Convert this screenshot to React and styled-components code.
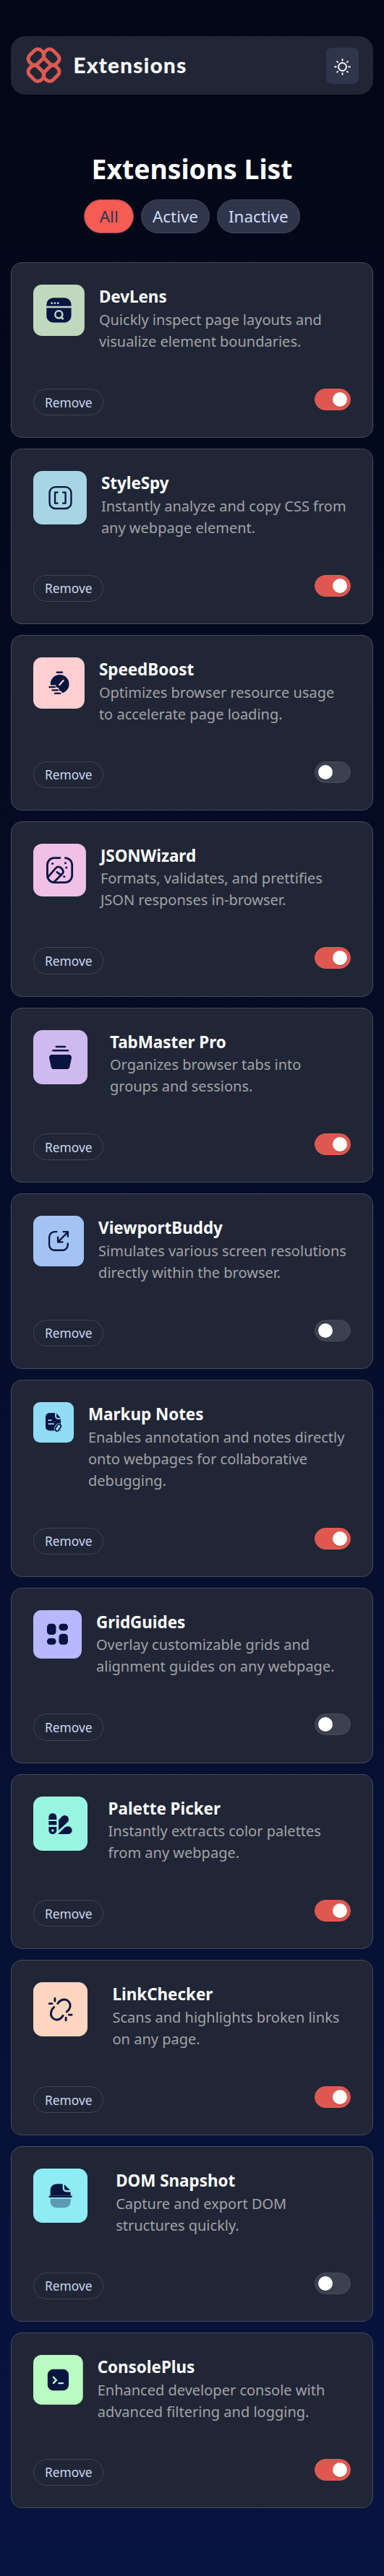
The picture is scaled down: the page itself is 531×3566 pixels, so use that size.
import React, { useState } from "react";
import styled, { createGlobalStyle } from "styled-components";

const INK = "#091540";

const GlobalStyle = createGlobalStyle`
  * { box-sizing: border-box; }
  body {
    margin: 0;
    font-family: "Noto Sans", sans-serif;
    background: linear-gradient(180deg, #020715 0%, #081440 100%);
  }
  button { font-family: inherit; cursor: pointer; }
`;

const Page = styled.div`
  min-height: 3566px;
  padding: 50px 15px 94px;
  display: flex;
  flex-direction: column;
`;

const Header = styled.header`
  display: flex;
  align-items: center;
  justify-content: space-between;
  height: 81px;
  padding: 0 20px 0 21px;
  border-radius: 20px;
  background: #212636;
`;

const Brand = styled.div`
  display: flex;
  align-items: center;
  gap: 16.5px;
`;

const BrandName = styled.span`
  padding-bottom: 2px;
  font-family: Lato, sans-serif;
  font-weight: 700;
  font-size: 29.4px;
  line-height: 40px;
  letter-spacing: 1.5px;
  color: #fbfdfe;
  -webkit-text-stroke: 0.4px #fbfdfe;
`;

const ThemeButton = styled.button`
  display: flex;
  align-items: center;
  justify-content: center;
  width: 45px;
  height: 50px;
  padding: 3px 0 0;
  border: 0;
  border-radius: 8px;
  background: #2f354b;
`;

const Title = styled.h1`
  margin: 78px 0 0;
  font-size: 37.3px;
  line-height: 50px;
  font-weight: 700;
  text-align: center;
  color: #fff;
`;

const Filters = styled.div`
  display: flex;
  justify-content: center;
  gap: 10px;
  margin-top: 17px;
`;

const FilterButton = styled.button`
  height: 47px;
  padding: 0 ${(p) => (p.$active ? 20.4 : 15)}px;
  border: 1px solid ${(p) => (p.$active ? "#8f4a51" : "#42475a")};
  border-radius: 23.5px;
  font-size: 22.4px;
  line-height: 32px;
  color: ${(p) => (p.$active ? "#2f354b" : "#cfdcf5")};
  background: ${(p) => (p.$active ? "#f45c54" : "#2f354b")};
`;

const List = styled.main`
  display: flex;
  flex-direction: column;
  gap: 15px;
  margin-top: 40.4px;
`;

const Card = styled.article`
  display: flex;
  flex-direction: column;
  gap: 50px;
  padding: 30px;
  border: 1px solid #464a59;
  border-radius: 15px;
  background: #212636;
`;

const Info = styled.div`
  display: flex;
  align-items: flex-start;
  gap: ${(p) => p.$gap}px;
`;

const Tile = styled.svg`
  flex: none;
  display: block;
  width: ${(p) => p.$size}px;
  height: ${(p) => p.$size}px;
`;

const Name = styled.h2`
  margin: 0;
  font-size: 22.4px;
  line-height: 33.6px;
  font-weight: 700;
  color: #fff;
`;

const Description = styled.p`
  margin: 0;
  font-size: 20px;
  line-height: 30px;
  color: #a1a2a6;
  white-space: pre-line;
`;

const Actions = styled.div`
  display: flex;
  align-items: flex-start;
  justify-content: space-between;
`;

const RemoveButton = styled.button`
  height: 37.2px;
  padding: 0 15px;
  border: 1px solid #404453;
  border-radius: 18.6px;
  font-size: 17.33px;
  line-height: 24px;
  color: #cbd8f2;
  background: transparent;
`;

const Switch = styled.button`
  display: flex;
  justify-content: ${(p) => (p.$on ? "flex-end" : "flex-start")};
  width: 50px;
  height: 30px;
  padding: 4px;
  border: 1px solid ${(p) => (p.$on ? "#e95b53" : "#464b5a")};
  border-radius: 15px;
  background: ${(p) => (p.$on ? "#de5850" : "#3c4150")};
`;

const Knob = styled.span`
  width: 20px;
  height: 20px;
  border-radius: 50%;
  background: #fff;
  box-shadow: 0 1px 1px rgba(0, 0, 0, 0.15);
`;

function Logo() {
  return (
    <svg width="49" height="50.6" viewBox="-24.5 -25.3 49 50.6" fill="none" stroke="#de5952" strokeWidth="5">
      <rect x="-11.4" y="-8.1" width="22.8" height="16.2" rx="6.8" transform="translate(-10.5 -11.3) rotate(-45)" />
      <rect x="-11.4" y="-8.1" width="22.8" height="16.2" rx="6.8" transform="translate(10.5 -11.3) rotate(45)" />
      <rect x="-11.4" y="-8.1" width="22.8" height="16.2" rx="6.8" transform="translate(-10.5 11.3) rotate(45)" />
      <rect x="-11.4" y="-8.1" width="22.8" height="16.2" rx="6.8" transform="translate(10.5 11.3) rotate(-45)" />
    </svg>
  );
}

function Sun() {
  return (
    <svg width="23" height="23" viewBox="0 0 22 22" fill="none" stroke="#fbfdfe" strokeWidth="1.8" strokeLinecap="round">
      <circle cx="11" cy="11" r="5.2" />
      <path d="M11 .95v1.8M11 19.25v1.8M.95 11h1.8M19.25 11h1.8M3.9 3.9l1 1M17.1 17.1l1 1M3.9 18.1l1-1M17.1 4.9l1-1" />
    </svg>
  );
}

const line = (width = 2) => ({
  fill: "none",
  stroke: INK,
  strokeWidth: width,
  strokeLinecap: "round",
  strokeLinejoin: "round",
});

const lensIcon = (bg) => (
  <>
    <rect x="15.5" y="15.5" width="29" height="29" rx="8" fill={INK} />
    <path d="M15 26.2h30" stroke={bg} strokeWidth="2.2" />
    <g fill={bg}>
      <circle cx="21.6" cy="21.7" r="1.2" />
      <circle cx="25.3" cy="21.7" r="1.2" />
      <circle cx="29" cy="21.7" r="1.2" />
    </g>
    <circle cx="29.9" cy="35" r="4.3" fill="none" stroke={bg} strokeWidth="2.1" />
    <path d="M32.6 38l2 2" stroke={bg} strokeWidth="2.2" strokeLinecap="round" />
  </>
);

const bracketsIcon = () => (
  <g {...line(1.9)}>
    <rect x="18.3" y="18" width="24.3" height="24.2" rx="6.5" />
    <path d="M28 24h-3.6v12.2H28M32.6 24h3.6v12.2h-3.6" strokeLinecap="butt" />
  </g>
);

const stopwatchIcon = (bg) => (
  <>
    <circle cx="31" cy="31.3" r="10.9" fill={INK} />
    <path d="M27.8 17.6h6" {...line(2)} />
    <path d="M30.7 32.1l4.5-5" stroke={bg} strokeWidth="1.9" strokeLinecap="round" />
    <path d="M18 32.5h8.5v2.2l3.5 1.4v2.5l3.2 1.4 1.4 4H18z" fill={bg} />
    <path d="M19 34.8h6.2M22.4 38.4h6.2M25.3 42.2h6.2" {...line(2)} />
  </>
);

const wandIcon = () => (
  <>
    <g {...line(2.3)}>
      <path d="M30.4 16.1H24a8 8 0 0 0-8 8v12a8 8 0 0 0 8 8h12.2a8 8 0 0 0 8-8V24a8 8 0 0 0-7.6-7.9" />
      <path d="M16.7 38l9-10.3c2-2.2 4.2-1.6 6 0 2.3 2 3.2 4 1.6 6.3L23.3 44" />
      <path d="M27 32.3l3.4 2.6" />
    </g>
    <g fill={INK}>
      <circle cx="21.9" cy="22.7" r="1.25" />
      <circle cx="36.6" cy="22" r="1.25" />
      <circle cx="37.6" cy="27.1" r="1.25" />
      <circle cx="35.2" cy="37.4" r="1.25" />
    </g>
  </>
);

const tabsIcon = () => (
  <>
    <path d="M25.4 18.4h9.8M21.8 22.6h16.6" {...line(2)} />
    <path d="M21 27.2h18c2.6 0 3.8 1.7 3.3 4l-2 9.3c-.4 1.8-1.4 2.7-3.2 2.7H23c-1.8 0-2.9-.9-3.3-2.7l-2-9.3c-.5-2.3.7-4 3.3-4z" fill={INK} />
  </>
);

const viewportIcon = () => (
  <g {...line(2)}>
    <path d="M27.6 18.9h-2.2a6.5 6.5 0 0 0-6.5 6.5v9a6.5 6.5 0 0 0 6.5 6.5h9a6.5 6.5 0 0 0 6.5-6.5v-1.6" />
    <path d="M29.2 31.2L41 19.2M35.6 19H41v5.6M29.2 25.5v5.7h5.4" />
  </g>
);

const notesIcon = (bg) => (
  <>
    <path d="M24.6 16h7.6v4.6c0 3 1.6 4.8 4.8 4.8h3.7v16.9H24.6c-4 0-6.4-2.4-6.4-6.4V22.4c0-4 2.4-6.4 6.4-6.4z" fill={INK} />
    <path d="M34.3 16.6l6 6.7h-3.6c-1.6 0-2.4-1-2.4-2.5z" fill={INK} />
    <path d="M22.6 26.8h4M22.6 32.2h7.6" stroke={bg} strokeWidth="1.9" strokeLinecap="round" />
    <rect x="29.7" y="33" width="14" height="9.6" rx="4.8" fill={bg} transform="rotate(-58 36.7 37.8)" />
    <rect x="31.2" y="35" width="11" height="5.6" rx="2.8" {...line(1.9)} transform="rotate(-58 36.7 37.8)" />
  </>
);

const gridIcon = () => (
  <g fill={INK}>
    <rect x="17" y="16.9" width="11.2" height="13.6" rx="4" />
    <rect x="17" y="34.7" width="11.2" height="8.1" rx="3.8" />
    <rect x="31.8" y="16.9" width="11.1" height="8.3" rx="3.8" />
    <rect x="31.8" y="29.3" width="11.1" height="13.5" rx="4" />
  </g>
);

const paletteIcon = (bg) => (
  <>
    <g fill={INK}>
      <path d="M17.1 25.6v-2.9a4.35 4.35 0 0 1 8.7 0v2.9zM17.1 27.2h8.7v4.2h-8.7zM17.1 33.6h8.7v3.7a4.35 4.35 0 0 1-8.7 0z" />
      <path d="M28 26.2l3.6-4.1a4.4 4.4 0 0 1 6.3 6.2L28 37.6z" />
      <path d="M27.2 41.6l7.6-7.4a5 5 0 0 1 3.6-1.2 4.3 4.3 0 0 1 .4 8.6z" />
    </g>
    <circle cx="21.5" cy="37.5" r="1.4" fill={bg} />
  </>
);

const linkIcon = () => (
  <path
    d="M27 23.6C30.2 19 35 18 38.3 20.6c3.6 3 3.7 8-1.3 12.2M22.9 27.6c-4.2 4-4.4 9.4-1 12.4 3.3 2.8 8.2 1.9 11-3M23.9 17.9v3M17.8 23.7h3M36.1 39.3v3M39.5 36.1h3"
    {...line(2.3)}
  />
);

const snapshotIcon = () => (
  <>
    <path d="M18.9 30v-5.4c0-4.8 2.8-7.6 7.6-7.6h6v4c0 3.2 1.6 4.9 4.9 4.9h3.9V30z" fill={INK} />
    <path d="M34.3 17.6l6.4 6.3h-3.6c-1.9 0-2.8-.9-2.8-2.8z" fill={INK} />
    <path d="M18.2 31h23.8" {...line(2)} />
    <path d="M18.9 33.4h22.4v2.4c0 4.8-2.8 7.6-7.6 7.6h-7.2c-4.8 0-7.6-2.8-7.6-7.6z" fill={INK} opacity="0.38" />
  </>
);

const consoleIcon = (bg) => (
  <>
    <rect x="17.3" y="17.2" width="25.5" height="25.8" rx="7" fill={INK} />
    <path d="M24.3 26.8l3.6 3.7-3.6 3.7M30.8 34.2h5" fill="none" stroke={bg} strokeWidth="2" strokeLinecap="round" strokeLinejoin="round" />
  </>
);

const EXTENSIONS = [
  { name: "DevLens", text: "Quickly inspect page layouts and\nvisualize element boundaries.", bg: "#c0d8bd", size: 70.9, on: true, icon: lensIcon },
  { name: "StyleSpy", text: "Instantly analyze and copy CSS from\nany webpage element.", bg: "#a8d5e3", size: 73.9, on: true, icon: bracketsIcon },
  { name: "SpeedBoost", text: "Optimizes browser resource usage\nto accelerate page loading.", bg: "#ffcfd1", size: 70.9, on: false, icon: stopwatchIcon },
  { name: "JSONWizard", text: "Formats, validates, and prettifies\nJSON responses in-browser.", bg: "#f0c0e6", size: 72.9, on: true, icon: wandIcon },
  { name: "TabMaster Pro", text: "Organizes browser tabs into\ngroups and sessions.", bg: "#cfbaef", size: 75, gap: 31, on: true, icon: tabsIcon },
  { name: "ViewportBuddy", text: "Simulates various screen resolutions\ndirectly within the browser.", bg: "#a3c3f3", size: 70.1, on: false, icon: viewportIcon },
  { name: "Markup Notes", text: "Enables annotation and notes directly\nonto webpages for collaborative\ndebugging.", bg: "#90dcf4", size: 56, on: true, icon: notesIcon },
  { name: "GridGuides", text: "Overlay customizable grids and\nalignment guides on any webpage.", bg: "#b7b8ff", size: 67, on: false, icon: gridIcon },
  { name: "Palette Picker", text: "Instantly extracts color palettes\nfrom any webpage.", bg: "#98f5e1", size: 75, gap: 28.6, on: true, icon: paletteIcon },
  { name: "LinkChecker", text: "Scans and highlights broken links\non any page.", bg: "#ffd6bf", size: 75, gap: 34.5, on: true, icon: linkIcon },
  { name: "DOM Snapshot", text: "Capture and export DOM\nstructures quickly.", bg: "#8eecf5", size: 75, gap: 39.2, on: false, icon: snapshotIcon },
  { name: "ConsolePlus", text: "Enhanced developer console with\nadvanced filtering and logging.", bg: "#b9fbc0", size: 68.7, on: true, icon: consoleIcon },
];

function ExtensionCard({ item }) {
  const [on, setOn] = useState(item.on);
  return (
    <Card>
      <Info $gap={item.gap ?? 20}>
        <Tile $size={item.size} viewBox="0 0 60 60">
          <rect width="60" height="60" rx="10" fill={item.bg} />
          {item.icon(item.bg)}
        </Tile>
        <div>
          <Name>{item.name}</Name>
          <Description>{item.text}</Description>
        </div>
      </Info>
      <Actions>
        <RemoveButton>Remove</RemoveButton>
        <Switch role="switch" aria-checked={on} $on={on} onClick={() => setOn(!on)}>
          <Knob />
        </Switch>
      </Actions>
    </Card>
  );
}

export default function App() {
  return (
    <>
      <GlobalStyle />
      <Page>
        <Header>
          <Brand>
            <Logo />
            <BrandName>Extensions</BrandName>
          </Brand>
          <ThemeButton aria-label="Toggle theme">
            <Sun />
          </ThemeButton>
        </Header>
        <Title>Extensions List</Title>
        <Filters>
          <FilterButton $active>All</FilterButton>
          <FilterButton>Active</FilterButton>
          <FilterButton>Inactive</FilterButton>
        </Filters>
        <List>
          {EXTENSIONS.map((item) => (
            <ExtensionCard key={item.name} item={item} />
          ))}
        </List>
      </Page>
    </>
  );
}
